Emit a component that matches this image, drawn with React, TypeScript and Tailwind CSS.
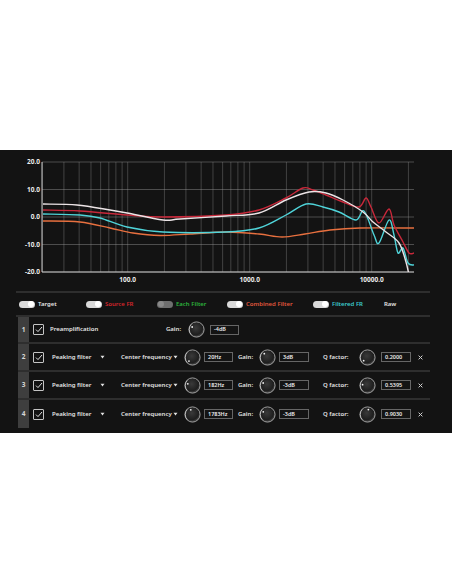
import React from 'react'

type Pt = [number, number]

// frequency / dB -> svg coords (svg top sits at page y 150)
const xf = (f: number) => 127.7 + 122 * (Math.log10(f) - 2)
const yd = (db: number) => 67 - 2.75 * db

const gridFreqs = [
  20, 30, 40, 50, 60, 70, 80, 90, 100, 200, 300, 400, 500, 600, 700, 800, 900,
  1000, 2000, 3000, 4000, 5000, 6000, 7000, 8000, 9000, 10000, 20000,
]

// curve points, page coordinates
const targetPts: Pt[] = [
  [43, 204], [77, 205], [110, 210], [127, 213], [163, 220], [180, 219], [226, 216],
  [259, 213], [286, 200], [309, 192], [326, 193], [343, 200], [363, 212], [373, 222],
  [386, 232], [399, 243], [406, 262], [410, 280],
]
const sourcePts: Pt[] = [
  [43, 210], [80, 211], [127, 215], [163, 217], [226, 215], [259, 210], [286, 198],
  [303, 188], [313, 190], [326, 195], [343, 202], [359, 207], [366, 198], [371, 207],
  [379, 223], [389, 209], [394, 225], [403, 242], [409, 253], [414, 253],
]
const filteredPts: Pt[] = [
  [43, 214], [80, 215], [100, 218], [127, 227], [163, 232], [226, 232], [259, 228],
  [286, 215], [306, 204], [323, 207], [339, 212], [356, 220], [364, 211], [374, 235],
  [379, 243], [389, 220], [394, 235], [398, 253], [403, 248], [408, 263], [414, 265],
]
const combinedPts: Pt[] = [
  [43, 221], [80, 222], [110, 228], [133, 233], [160, 235.5], [190, 234], [226, 232],
  [259, 234], [282, 237], [305, 234], [330, 230], [360, 228], [414, 228],
]

function smooth(pts: Pt[]) {
  const p = pts.map(([x, y]) => [x, y - 150])
  let d = `M${p[0][0]},${p[0][1]}`
  for (let i = 0; i < p.length - 1; i++) {
    const p0 = p[i - 1] || p[i]
    const p1 = p[i]
    const p2 = p[i + 1]
    const p3 = p[i + 2] || p2
    const c1x = p1[0] + (p2[0] - p0[0]) / 6
    const c1y = p1[1] + (p2[1] - p0[1]) / 6
    const c2x = p2[0] - (p3[0] - p1[0]) / 6
    const c2y = p2[1] - (p3[1] - p1[1]) / 6
    d += ` C${c1x},${c1y} ${c2x},${c2y} ${p2[0]},${p2[1]}`
  }
  return d
}

function Chart() {
  return (
    <svg width="452" height="141" viewBox="0 0 452 141" className="block">
      <defs>
        <clipPath id="plot">
          <rect x="42" y="12" width="372" height="110" />
        </clipPath>
      </defs>
      {[20, 10, 0, -10, -20].map((db) => (
        <line key={db} x1="42" x2="414" y1={yd(db)} y2={yd(db)} stroke="#9a9a9a" strokeOpacity="0.55" strokeWidth="0.8" />
      ))}
      {gridFreqs.map((f) => (
        <line key={f} x1={xf(f)} x2={xf(f)} y1="12" y2="122" stroke="#9a9a9a" strokeOpacity="0.5" strokeWidth="0.7" />
      ))}
      <line x1="42" x2="42" y1="12" y2="122" stroke="#c8c8c8" strokeWidth="1" />
      <line x1="42" x2="414" y1="122" y2="122" stroke="#c8c8c8" strokeWidth="1" />
      {[20, 10, 0, -10, -20].map((db) => (
        <text key={db} x="40" y={yd(db) + 2.3} textAnchor="end" fontSize="6.5" fontWeight="700" fill="#ececec" fontFamily="Noto Sans, sans-serif">
          {db.toFixed(1)}
        </text>
      ))}
      {[100, 1000, 10000].map((f) => (
        <text key={f} x={xf(f)} y="131.5" textAnchor="middle" fontSize="6.5" fontWeight="700" fill="#ececec" fontFamily="Noto Sans, sans-serif">
          {f.toFixed(1)}
        </text>
      ))}
      <g clipPath="url(#plot)" fill="none" strokeWidth="1.4" strokeLinejoin="round">
        <path d={smooth(combinedPts)} stroke="#e8703f" />
        <path d={smooth(sourcePts)} stroke="#c8283a" />
        <path d={smooth(filteredPts)} stroke="#4fd3d8" />
        <path d={smooth(targetPts)} stroke="#ece4e6" />
      </g>
    </svg>
  )
}

function Toggle({ on }: { on: boolean }) {
  return (
    <div
      className={
        on
          ? 'w-[16px] h-[7px] rounded-full bg-[#d9d9d9] flex items-center justify-end pr-[1px]'
          : 'w-[16px] h-[7px] rounded-full bg-[#6f6f6f] flex items-center justify-start pl-[1px]'
      }
    >
      <div className={on ? 'w-[6px] h-[6px] rounded-full bg-white' : 'w-[6px] h-[6px] rounded-full bg-[#8a8a8a]'} />
    </div>
  )
}

const legend = [
  { label: 'Target', color: 'text-[#e4e4e4]', on: true, w: 'w-[67px]' },
  { label: 'Source FR', color: 'text-[#d3262c]', on: true, w: 'w-[71px]' },
  { label: 'Each Filter', color: 'text-[#2db33d]', on: false, w: 'w-[70px]' },
  { label: 'Combined Filter', color: 'text-[#e2583d]', on: true, w: 'w-[86px]' },
  { label: 'Filtered FR', color: 'text-[#3ccacd]', on: true, w: 'w-[71px]' },
]

function Knob({ angle }: { angle: number }) {
  const r = (angle * Math.PI) / 180
  const dx = 8.5 + 5 * Math.sin(r)
  const dy = 8.5 - 5 * Math.cos(r)
  const id = `k${angle}`.replace('-', 'm')
  return (
    <svg width="17" height="17" viewBox="0 0 17 17" className="shrink-0">
      <defs>
        <radialGradient id={id} cx="0.45" cy="0.4" r="0.6">
          <stop offset="0" stopColor="#3a3a3a" />
          <stop offset="0.75" stopColor="#1e1e1e" />
          <stop offset="1" stopColor="#555" />
        </radialGradient>
      </defs>
      <circle cx="8.5" cy="8.5" r="7.6" fill={`url(#${id})`} stroke="#a8a8a8" strokeWidth="0.9" />
      <path d="M3.2 13.5 A7.6 7.6 0 0 1 3.2 3.5" fill="none" stroke="#e0e0e0" strokeWidth="0.9" strokeOpacity="0.7" />
      <circle cx={dx} cy={dy} r="0.9" fill="#f2f2f2" />
    </svg>
  )
}

function Check() {
  return (
    <div className="w-[11px] h-[11px] border border-[#c4c4c4] rounded-[1px] flex items-center justify-center shrink-0">
      <svg width="8" height="7" viewBox="0 0 8 7">
        <path d="M1 3.6 L3 5.6 L7 1" fill="none" stroke="#e2e2e2" strokeWidth="1" />
      </svg>
    </div>
  )
}

function Caret() {
  return (
    <svg width="5" height="4" viewBox="0 0 5 4">
      <path d="M0.5 0.8 L4.5 0.8 L2.5 3.4 Z" fill="#e4e4e4" />
    </svg>
  )
}

function Field({ value, w }: { value: string; w: string }) {
  return (
    <div className={`${w} h-[10px] border border-[#666] bg-[#141414] flex items-center pl-[3px] text-[5.5px] text-[#eaeaea] shrink-0`}>
      {value}
    </div>
  )
}

function Num({ n }: { n: number }) {
  return (
    <div className="self-stretch w-[11px] bg-[#3e3e3e] flex items-center justify-center text-[6.5px] font-bold text-[#d6d6d6] shrink-0">
      {n}
    </div>
  )
}

const filters = [
  { n: 2, freq: '20Hz', fa: -135, gain: '3dB', ga: -40, q: '0.2000', qa: -130 },
  { n: 3, freq: '182Hz', fa: -70, gain: '-3dB', ga: -60, q: '0.5395', qa: -80 },
  { n: 4, freq: '1783Hz', fa: -20, gain: '-3dB', ga: -58, q: '0.9030', qa: 10 },
]

export default function App() {
  return (
    <div className="w-[452px] h-[584px] bg-white flex flex-col antialiased font-['Noto_Sans','Open_Sans',sans-serif]">
      <div className="h-[150px] shrink-0" />
      <div className="h-[283px] shrink-0 bg-[#131313] flex flex-col">
        <Chart />
        <div className="mx-[16px] w-[414px] h-[2px] bg-[#2e2e2e]" />
        <div className="h-[22px] flex items-center pl-[19px] text-[6px] font-semibold">
          {legend.map((l) => (
            <div key={l.label} className={`${l.w} flex items-center gap-[3px]`}>
              <Toggle on={l.on} />
              <span className={l.color}>{l.label}</span>
            </div>
          ))}
          <span className="text-[#e4e4e4]">Raw</span>
        </div>
        <div className="mx-[16px] w-[414px] h-[2px] bg-[#2e2e2e]" />
        <div className="ml-[18px] w-[412px] flex flex-col text-[6px] font-semibold text-[#e4e4e4]">
          <div className="h-[27px] flex items-center border-b-2 border-[#2e2e2e]">
            <Num n={1} />
            <div className="ml-[4px]"><Check /></div>
            <span className="ml-[6px] w-[116px]">Preamplification</span>
            <span className="w-[22px]">Gain:</span>
            <Knob angle={-60} />
            <div className="ml-[5px]"><Field value="-4dB" w="w-[29px]" /></div>
          </div>
          {filters.map((f, i) => (
            <div
              key={f.n}
              className={
                i === filters.length - 1
                  ? 'h-[28px] flex items-center'
                  : 'h-[28px] flex items-center border-b-2 border-[#2e2e2e]'
              }
            >
              <Num n={f.n} />
              <div className="ml-[4px]"><Check /></div>
              <span className="ml-[8px] w-[48px]">Peaking filter</span>
              <div className="w-[21px] flex"><Caret /></div>
              <span className="w-[52px]">Center frequency</span>
              <div className="w-[11px] flex"><Caret /></div>
              <Knob angle={f.fa} />
              <div className="ml-[3px]"><Field value={f.freq} w="w-[29px]" /></div>
              <span className="ml-[5px] w-[21px]">Gain:</span>
              <Knob angle={f.ga} />
              <div className="ml-[3px]"><Field value={f.gain} w="w-[30px]" /></div>
              <span className="ml-[14px] w-[36px]">Q factor:</span>
              <Knob angle={f.qa} />
              <div className="ml-[5px]"><Field value={f.q} w="w-[30px]" /></div>
              <svg width="5" height="5" viewBox="0 0 5 5" className="ml-[7px]">
                <path d="M0.6 0.6 L4.4 4.4 M4.4 0.6 L0.6 4.4" stroke="#d0d0d0" strokeWidth="1" />
              </svg>
            </div>
          ))}
        </div>
      </div>
      <div className="flex-1" />
    </div>
  )
}
